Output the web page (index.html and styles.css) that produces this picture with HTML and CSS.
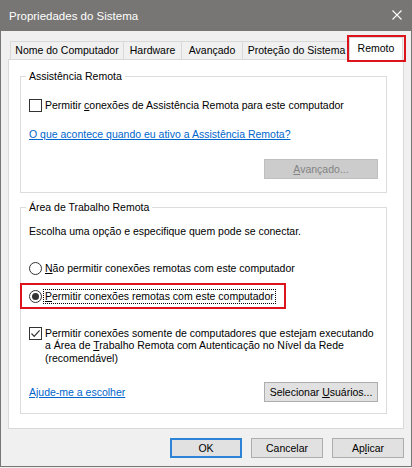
FILE: index.html
```html
<!DOCTYPE html>
<html lang="pt-BR">
<head>
<meta charset="utf-8">
<title>Propriedades do Sistema</title>
<link rel="stylesheet" href="styles.css">
</head>
<body>
<div class="window">
  <div class="titlebar">
    <span class="title">Propriedades do Sistema</span>
    <svg class="close" width="10" height="10" viewBox="0 0 10 10"><path d="M0.5 0.5L9.5 9.5M9.5 0.5L0.5 9.5" stroke="#fff" stroke-width="1.1" fill="none"/></svg>
  </div>
  <div class="tabs">
    <div class="tab tab-name">Nome do Computador</div>
    <div class="tab tab-hw">Hardware</div>
    <div class="tab tab-adv">Avançado</div>
    <div class="tab tab-prot">Proteção do Sistema</div>
    <div class="tab tab-active">Remoto<span class="mark mark-tab"></span></div>
  </div>
  <div class="panel">
    <fieldset class="group group-assist">
      <legend>Assistência Remota</legend>
      <label class="check-row"><span class="checkbox"></span><span>Permitir <u>c</u>onexões de Assistência Remota para este computador</span></label>
      <a class="link link-what">O que acontece quando eu ativo a Assistência Remota?</a>
      <div class="btn-row"><button class="btn btn-wide" disabled><u>A</u>vançado...</button></div>
    </fieldset>
    <fieldset class="group group-desktop">
      <legend>Área de Trabalho Remota</legend>
      <p class="hint">Escolha uma opção e especifique quem pode se conectar.</p>
      <label class="radio-row radio-first"><span class="radio"></span><span class="radio-text"><u>N</u>ão permitir conexões remotas com este computador</span></label>
      <div class="highlight">
        <label class="radio-row"><span class="radio radio-on"></span><span class="radio-text focus"><u>P</u>ermitir conexões remotas com este computador</span></label>
      </div>
      <label class="check-row check-nla"><span class="checkbox"><svg width="11" height="11" viewBox="0 0 11 11"><path d="M1.5 5.5L4.2 8.3L9.6 2.4" fill="none" stroke="#333" stroke-width="1.2"/></svg></span><span class="nla-text">Permitir conexões somente de computadores que estejam executando<br>a Área de <u>T</u>rabalho Remota com Autenticação no Nível da Rede<br>(recomendável)</span></label>
      <div class="footer-row">
        <a class="link">Ajude-me a escolher</a>
        <button class="btn btn-wide">Selecionar <u>U</u>suários...</button>
      </div>
    </fieldset>
  </div>
  <div class="actions">
    <button class="btn btn-default">OK</button>
    <button class="btn">Cancelar</button>
    <button class="btn">Ap<u>l</u>icar</button>
  </div>
</div>
</body>
</html>
```
FILE: styles.css
```css
* { box-sizing: border-box; }
html, body { margin: 0; padding: 0; }
body {
  width: 412px;
  height: 468px;
  background: #f0f0f0;
  font: 10.5px/13px "Liberation Sans", Arial, sans-serif;
  color: #000;
}
.window {
  height: 467px;
  border: 1px solid #787674;
  border-top: 0;
  background: #f0f0f0;
  display: flex;
  flex-direction: column;
}
.titlebar {
  height: 31px;
  flex: none;
  background: #787674;
  color: #fff;
  display: flex;
  align-items: center;
  justify-content: space-between;
  padding: 0 9px 0 8px;
}
.title { font-size: 11.5px; line-height: 14px; }
.close { display: block; margin-top: -1px; }

.tabs {
  height: 28px;
  flex: none;
  display: flex;
  align-items: flex-end;
  padding-left: 9px;
}
.tab {
  height: 18px;
  border: 1px solid #d9d9d9;
  border-bottom: 0;
  margin-left: -1px;
  background: #f0f0f0;
  display: flex;
  align-items: center;
  justify-content: center;
  white-space: nowrap;
}
.tab-name { width: 114px; margin-left: 0; }
.tab-hw { width: 59px; }
.tab-adv { width: 62px; }
.tab-prot { width: 109px; }
.tab-active {
  width: 54px;
  height: 23px;
  margin-left: -2px;
  margin-bottom: -1px;
  background: #fff;
  position: relative;
  z-index: 1;
  padding-bottom: 1px;
}
.mark { position: absolute; border: 2px solid #dc141e; }
.mark-tab { top: -3px; left: -3px; right: -4px; bottom: -2px; }

.panel {
  margin: 0 7px;
  height: 370px;
  flex: none;
  background: #fff;
  border: 1px solid #d9d9d9;
  padding: 9px 16px 13px 11px;
}
.group {
  margin: 0;
  min-width: 0;
  border: 1px solid #dcdcdc;
  padding: 0 8px 13px 8px;
}
.group legend {
  padding: 0 3px;
  margin-left: -3px;
  line-height: 14px;
}
.group-desktop { margin-top: 7px; padding-bottom: 11px; }

.check-row {
  display: flex;
  align-items: flex-start;
  gap: 3px;
  margin-top: 16px;
  white-space: nowrap;
}
.checkbox {
  flex: none;
  width: 13px;
  height: 13px;
  border: 1px solid #333;
  background: #fff;
  display: flex;
  align-items: center;
  justify-content: center;
}
.checkbox svg { display: block; }
.check-nla { margin-top: 18px; }
.nla-text { line-height: 12.5px; margin-top: -0.5px; }

.link {
  display: block;
  width: max-content;
  margin-top: 16px;
  color: #0066cc;
  text-decoration: underline;
  cursor: pointer;
}
.footer-row .link { margin-top: 1px; }

.btn-row { display: flex; justify-content: flex-end; margin-top: 18px; }
.btn {
  font: inherit;
  height: 20px;
  width: 72px;
  padding: 0;
  background: #e1e1e1;
  border: 1px solid #adadad;
  border-radius: 0;
  color: #000;
  line-height: 16px;
  flex: none;
}
.btn-wide { width: 114px; }
.btn:disabled { background: #cccccc; border-color: #bfbfbf; color: #838383; }
.btn-default { border: 2px solid #2b84d8; }

.hint { margin: 11px 0 0; white-space: nowrap; }
.radio-row {
  display: flex;
  align-items: center;
  gap: 2px;
  height: 13px;
  white-space: nowrap;
}
.radio-first { margin-top: 24px; }
.radio {
  flex: none;
  width: 13px;
  height: 13px;
  border: 1px solid #333;
  border-radius: 50%;
  background: #fff;
  display: flex;
  align-items: center;
  justify-content: center;
}
.radio-on::after {
  content: "";
  width: 7px;
  height: 7px;
  border-radius: 50%;
  background: #333;
}
.radio-text { padding: 0 1px; }
.focus { outline: 1px dotted #000; outline-offset: 0; }
.highlight {
  margin: 8px 0 0 -9px;
  width: 266px;
  border: 2px solid #dc141e;
  padding: 5px 0 4px 7px;
}

.footer-row {
  display: flex;
  justify-content: space-between;
  align-items: center;
  margin-top: 18px;
}

.actions {
  display: flex;
  justify-content: flex-end;
  gap: 9px;
  padding: 9px 7px 0 0;
}
```
